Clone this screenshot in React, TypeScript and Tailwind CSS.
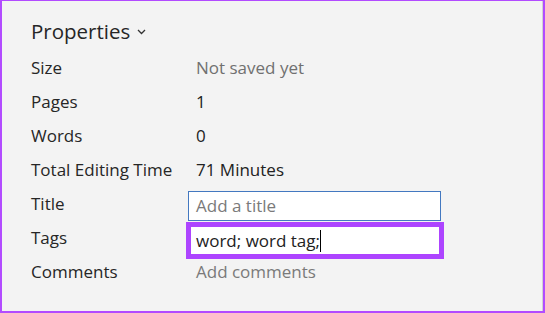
import React from "react";

const rows: { label: string; value: string; tone: "muted" | "dark" }[] = [
  { label: "Size", value: "Not saved yet", tone: "muted" },
  { label: "Pages", value: "1", tone: "dark" },
  { label: "Words", value: "0", tone: "dark" },
  { label: "Total Editing Time", value: "71 Minutes", tone: "dark" },
];

export default function App() {
  return (
    <div
      className="w-[545px] h-[313px] bg-[#f3f3f3] border-l-2 border-r-2 border-b-2 border-t border-[#b24bff] text-[#262626]"
      style={{ fontFamily: '"Open Sans", "Noto Sans", sans-serif' }}
    >
      <div className="h-full border-r border-[#d2d2d2] pl-[29px]">
        {/* header */}
        <div className="flex items-center gap-[7px] pt-[15px] mb-[5px] h-[45px]">
          <span className="text-[20.5px] leading-[28px]">Properties</span>
          <svg width="9" height="6" viewBox="0 0 9 6" className="mt-[2px]">
            <polyline points="1,1 4.5,4.5 8,1" fill="none" stroke="#333" strokeWidth="1.3" />
          </svg>
        </div>

        <div className="grid grid-cols-[157px_1fr] text-[17px] leading-[34px]">
          {rows.map((r) => (
            <React.Fragment key={r.label}>
              <div className="h-[34px]">{r.label}</div>
              <div className={`h-[34px] pl-[8px] ${r.tone === "muted" ? "text-[#707070]" : "text-[#222]"}`}>
                {r.value}
              </div>
            </React.Fragment>
          ))}

          <div className="h-[34px]">Title</div>
          <div className="h-[34px]">
            <div className="w-[253px] h-[30px] mt-[4px] bg-white border border-[#4378c0] pl-[7px] leading-[28px] text-[#7a7a7a]">
              Add a title
            </div>
          </div>

          <div className="h-[34px]">Tags</div>
          <div className="h-[34px] relative">
            <div className="absolute left-[-2px] top-[1px] w-[258px] h-[37px] border-[5px] border-[#ad44ff] bg-white pl-[5px] leading-[27px] text-[#222] flex items-center">
              <span>word; word tag;</span>
              <span className="inline-block w-px h-[22px] bg-black"></span>
            </div>
          </div>

          <div className="h-[34px]">Comments</div>
          <div className="h-[34px] pl-[8px] text-[#7a7a7a]">Add comments</div>
        </div>
      </div>
    </div>
  );
}
